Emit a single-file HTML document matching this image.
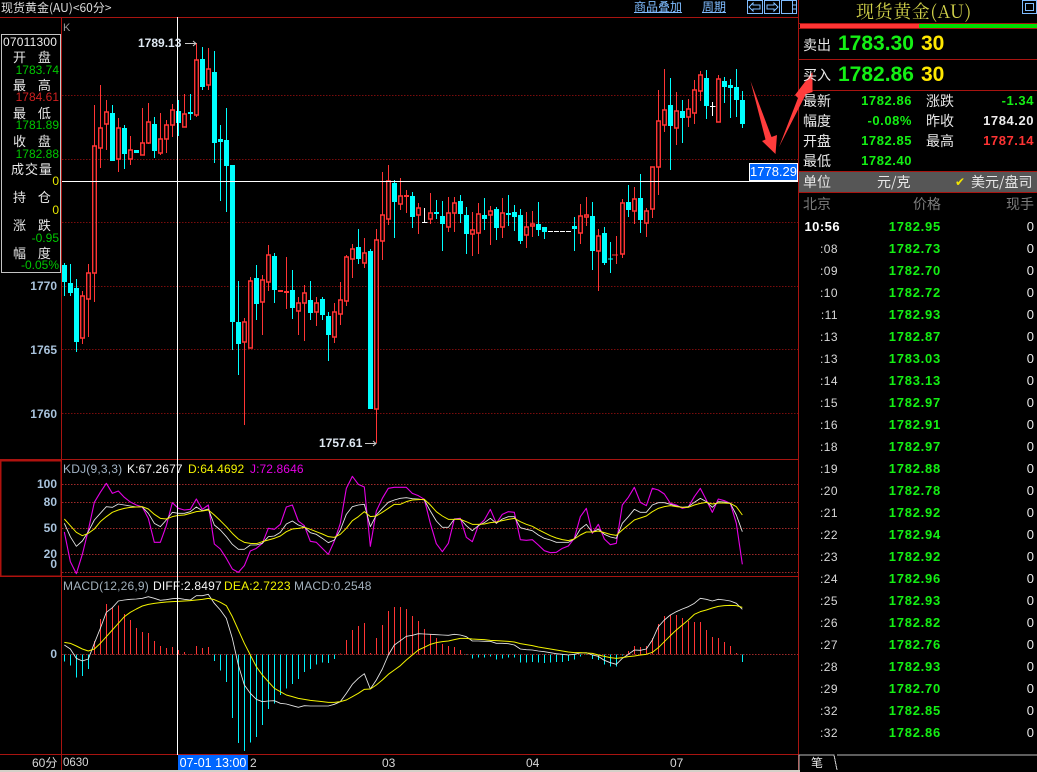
<!DOCTYPE html>
<html lang="zh"><head><meta charset="utf-8"><title>现货黄金</title>
<style>
html,body{margin:0;padding:0;background:#000;width:1037px;height:772px;overflow:hidden}
body{position:relative;font-family:"Liberation Sans","WenQuanYi Zen Hei","Noto Sans CJK SC",sans-serif;color:#ddd}
.a{position:absolute;white-space:pre;line-height:14px;font-size:12px}
.c{font-family:"WenQuanYi Zen Hei","Noto Sans CJK SC",sans-serif;font-size:13px;color:#e6e6e6}
.w{word-spacing:3px}
.r{text-align:right}
.ax{font-weight:bold;color:#a9c3dc;font-size:12px;width:50px;left:7px;text-align:right}
.g{color:#00c800}.lg{color:#14f014}
svg{position:absolute;left:0;top:0}
.lb{font-family:"WenQuanYi Zen Hei","Noto Sans CJK SC",sans-serif;font-size:14px;color:#e8e8e8;line-height:16px}
.v{font-weight:bold;font-size:13px;letter-spacing:.55px;line-height:16px;color:#14f014;text-align:right}
.big{font-weight:bold;font-size:21px;line-height:24px;color:#14f014}
.yl{font-weight:bold;font-size:21px;line-height:24px;color:#ffe800}
#t{position:absolute;left:800px;top:216px;width:237px}
#t div{display:grid;grid-template-columns:38px 103px 93px;height:22px;line-height:22px;font-size:13px;font-weight:bold;text-align:right;letter-spacing:.75px}
#t b:nth-child(1){font-weight:normal;color:#d8d8d8;font-size:12px;letter-spacing:.45px}
#t b:nth-child(2){color:#14f014}
#t b:nth-child(3){color:#e8e8e8;font-weight:normal;letter-spacing:0}
</style></head><body>
<svg width="1037" height="772" viewBox="0 0 1037 772" shape-rendering="crispEdges">
<g stroke="#7a0c0c" stroke-dasharray="1.5 1.5" stroke-width="1" fill="none"><path d="M62 95.5H798M62 159.5H798M62 222.5H798M62 286.5H798M62 349.5H798M62 413.5H798"/></g>
<g stroke="#a02a2a" stroke-dasharray="1.5 1.5" stroke-width="1" fill="none"><path d="M62 484.5H798M62 502.5H798M62 528.5H798M62 554.5H798M62 572.5H798M62 654.5H798"/></g>
<g fill="none" stroke="#a81410" stroke-width="1"><path d="M0 17.5H798M798.5 0V770M61.5 17V770M0 459.5H798M0 576.5H798M0 754.5H798"/></g>
<rect x="0.75" y="460.75" width="60.5" height="115.5" fill="none" stroke="#b0120e" stroke-width="1.5"/>
<rect x="0" y="770" width="800" height="2" fill="#d4d0c8"/>
</svg>

<svg width="1037" height="772" viewBox="0 0 1037 772">
<g id="cy" fill="#00ffff" stroke="none">
<path d="M62 265h5v17h-5zM68 283h5v10h-5zM74 288h5v54h-5zM110 113h5v48h-5zM122 128h5v26h-5zM134 150h5v3h-5zM152 124h5v27h-5zM176 111h5v12h-5zM188 112h5v2h-5zM200 59h5v28h-5zM212 72h5v71h-5zM218 139h5v3h-5zM224 140h5v26h-5zM230 165h5v157h-5zM236 322h5v22h-5zM254 278h5v26h-5zM272 256h5v34h-5zM290 290h5v18h-5zM308 300h5v13h-5zM320 299h5v16h-5zM326 316h5v19h-5zM356 247h5v12h-5zM368 251h5v158h-5zM392 183h5v19h-5zM410 196h5v21h-5zM434 212h5v2h-5zM440 216h5v8h-5zM458 201h5v13h-5zM464 215h5v19h-5zM482 215h5v4h-5zM494 209h5v19h-5zM506 213h5v2h-5zM512 212h5v5h-5zM518 215h5v26h-5zM536 224h5v6h-5zM542 227h5v5h-5zM572 226h5v3h-5zM590 216h5v35h-5zM602 233h5v30h-5zM608 258.500h5v1h-5zM626 202h5v8h-5zM638 198h5v22h-5zM668 105h5v21h-5zM680 111h5v7h-5zM704 78h5v28h-5zM722 81h5v6h-5zM728 85h5v3h-5zM734 87h5v13h-5zM740 100h5v24h-5z"/>
</g>
<path fill="none" stroke="#00ffff" stroke-width="1.1" shape-rendering="crispEdges" d="M64.500 263V296M70.500 264V296M76.500 279V352M112.500 105V161M124.500 125V169M154.500 117V158M178.500 100V136M190.500 94V120M202.500 47V90M214.500 51V163M220.500 125V201M226.500 108V212M232.500 165V350M238.500 281V375M256.500 265V320M274.500 253V303M292.500 270V319M310.500 281V320M322.500 297V320M328.500 312V361M358.500 229V264M370.500 249V409M394.500 180V238M412.500 192V228M436.500 200V219M442.500 201V251M460.500 195V223M466.500 207V254M484.500 198V230M496.500 207V240M508.500 195V226M514.500 205V231M520.500 209V244M538.500 202V236M544.500 227V239M574.500 217V251M592.500 202V270M604.500 227V265M610.500 242V273M628.500 185V217M640.500 174V233M670.500 78V170M682.500 100V143M706.500 70V119M724.500 77V103M730.500 79V118M736.500 69V117M742.500 91V128"/>
<path fill="none" stroke="#ff3434" stroke-width="1.1" shape-rendering="crispEdges" d="M82.500 291V296M82.500 338V344M88.500 264V273M88.500 299V337M94.500 105V146M94.500 273V302M100.500 85V128M100.500 148V168M106.500 100V112M106.500 124V150M118.500 118V128M118.500 159V172M130.500 136V150M130.500 159V165M142.500 108V143M148.500 103V122M148.500 143V144M160.500 113V139M160.500 153V155M166.500 120V125M166.500 139V153M172.500 104V110M172.500 125V137M184.500 94V114M196.500 43V60M196.500 115V117M208.500 48V69M208.500 85V90M244.500 318V322M244.500 342V425M250.500 277V281M262.500 275V280M262.500 302V335M268.500 245V255M268.500 282V291M286.500 257V291M286.500 293V309M298.500 297V303M298.500 311V335M304.500 285V293M304.500 303V341M316.500 297V303M316.500 312V326M334.500 303V312M334.500 337V343M340.500 282V300M340.500 314V325M346.500 255V257M346.500 301V306M352.500 244V249M352.500 259V278M364.500 238V253M364.500 263V268M376.500 229V240M376.500 409V443M382.500 172V215M382.500 241V260M388.500 165V181M388.500 219V225M400.500 178V196M400.500 204V210M406.500 190V195M406.500 197V213M418.500 203V208M418.500 215V234M430.500 193V213M430.500 219V224M448.500 197V213M448.500 227V232M454.500 197V203M454.500 213V232M472.500 212V230M472.500 234V256M478.500 203V214M478.500 233V254M490.500 206V211M490.500 215V245M502.500 198V213M502.500 227V238M526.500 212V227M526.500 235V248M532.500 211V224M532.500 226V237M580.500 204V216M580.500 233V244M586.500 197V215M586.500 217V226M598.500 229V236M598.500 251V291M616.500 236V264M622.500 199V203M622.500 254V258M634.500 187V199M634.500 211V224M646.500 208V211M646.500 223V237M652.500 209V218M658.500 90V121M658.500 167V195M664.500 69V110M664.500 125V132M676.500 92V111M676.500 128V145M688.500 99V109M688.500 117V127M694.500 80V90M694.500 113V124M700.500 71V75M700.500 91V101M718.500 75V79"/>
<path fill="none" stroke="#ff3434" stroke-width="1.4" d="M80.700 296h3.600V338h-3.600zM86.700 273h3.600V299h-3.600zM92.700 146h3.600V273h-3.600zM98.700 128h3.600V148h-3.600zM104.700 112h3.600V124h-3.600zM116.700 128h3.600V159h-3.600zM128.700 150h3.600V159h-3.600zM140.700 143h3.600V155h-3.600zM146.700 122h3.600V143h-3.600zM158.700 139h3.600V153h-3.600zM164.700 125h3.600V139h-3.600zM170.700 110h3.600V125h-3.600zM182.700 114h3.600V127h-3.600zM194.700 60h3.600V115h-3.600zM206.700 69h3.600V85h-3.600zM242.700 322h3.600V342h-3.600zM248.700 281h3.600V348h-3.600zM260.700 280h3.600V302h-3.600zM266.700 255h3.600V282h-3.600zM296.700 303h3.600V311h-3.600zM302.700 293h3.600V303h-3.600zM314.700 303h3.600V312h-3.600zM332.700 312h3.600V337h-3.600zM338.700 300h3.600V314h-3.600zM344.700 257h3.600V301h-3.600zM350.700 249h3.600V259h-3.600zM362.700 253h3.600V263h-3.600zM374.700 240h3.600V409h-3.600zM380.700 215h3.600V241h-3.600zM386.700 181h3.600V219h-3.600zM398.700 196h3.600V204h-3.600zM416.700 208h3.600V215h-3.600zM428.700 213h3.600V219h-3.600zM446.700 213h3.600V227h-3.600zM452.700 203h3.600V213h-3.600zM470.700 230h3.600V234h-3.600zM476.700 214h3.600V233h-3.600zM488.700 211h3.600V215h-3.600zM500.700 213h3.600V227h-3.600zM524.700 227h3.600V235h-3.600zM530.700 224h3.600V226h-3.600zM578.700 216h3.600V233h-3.600zM584.700 215h3.600V217h-3.600zM596.700 236h3.600V251h-3.600zM620.700 203h3.600V254h-3.600zM632.700 199h3.600V211h-3.600zM644.700 211h3.600V223h-3.600zM650.700 167h3.600V209h-3.600zM656.700 121h3.600V167h-3.600zM662.700 110h3.600V125h-3.600zM674.700 111h3.600V128h-3.600zM686.700 109h3.600V117h-3.600zM692.700 90h3.600V113h-3.600zM698.700 75h3.600V91h-3.600zM716.700 79h3.600V122h-3.600z"/>
<path fill="#ff3434" d="M278 290h5v2h-5zM284 291h5v2h-5zM404 195h5v2h-5zM612 254.500h6v1h-6z"/>
<path fill="none" stroke="#ffffff" stroke-width="1.1" shape-rendering="crispEdges" d="M424.500 208V222M422 222.500h5.500M712.500 102V116M710 106.500h5.500M548 231.500h5M554 231.500h5M560 231.500h5M566 231.500h5"/>
<path fill="#ff3c3c" d="M750.500 81L765.500 139.500L762 141L775.500 154L777 135L771.500 137Z"/>
<path fill="none" stroke="#fff" stroke-width="1.2" shape-rendering="crispEdges" d="M62 181.500H798M177.500 17V755"/>
<path fill="none" stroke="#c9c9c9" stroke-width="1" d="M185 43.500H196M193 41L196 43.500L193 46M365 443.500H376M373 441L376 443.500L373 446"/>
</svg>

<svg width="800" height="125" viewBox="0 0 2400 375" style="left:0;top:455px">
<polyline fill="none" stroke="#e400e4" stroke-width="3.300" stroke-linejoin="round" points="193,231 211,320 229,356 247,298 265,225 283,142 301,112 319,85 337,115 355,108 373,127 391,141 409,150 427,156 445,190 463,262 481,262 499,212 517,143 535,160 553,165 571,163 589,132 607,163 625,150 643,267 661,282 679,310 697,342 715,352 733,332 751,288 769,280 787,265 805,220 823,223 841,208 859,156 877,150 895,198 913,212 931,259 949,262 967,280 985,298 1003,258 1021,205 1039,100 1057,64 1075,88 1093,96 1111,274 1129,168 1147,130 1165,100 1183,97 1201,97 1219,97 1237,115 1255,122 1273,133 1291,205 1309,266 1327,290 1345,265 1363,192 1381,190 1399,247 1417,260 1435,212 1453,195 1471,163 1489,205 1507,178 1525,170 1543,172 1561,254 1579,256 1597,254 1615,270 1633,287 1651,293 1669,292 1687,280 1705,273 1723,250 1741,185 1759,160 1777,235 1795,208 1813,252 1831,269 1849,265 1867,150 1885,127 1903,97 1921,142 1939,152 1957,100 1975,105 1993,117 2011,145 2029,150 2047,160 2065,156 2083,125 2101,100 2119,135 2137,172 2155,132 2173,137 2191,145 2209,205 2227,328"/>
<polyline fill="none" stroke="#e8e8e8" stroke-width="2.600" stroke-linejoin="round" points="193,205 211,245 229,274 247,258 265,230 283,195 301,175 319,155 337,157 355,147 373,150 391,153 409,156 427,156 445,175 463,205 481,215 499,195 517,172 535,175 553,175 571,170 589,156 607,167 625,162 643,210 661,225 679,245 697,268 715,283 733,283 751,270 769,270 787,265 805,245 823,243 841,232 859,207 877,198 895,210 913,216 931,233 949,238 967,250 985,263 1003,255 1021,225 1039,178 1057,155 1075,150 1093,148 1111,215 1129,180 1147,160 1165,142 1183,135 1201,130 1219,128 1237,131 1255,132 1273,135 1291,168 1309,198 1327,217 1345,217 1363,192 1381,192 1399,212 1417,227 1435,212 1453,203 1471,190 1489,205 1507,192 1525,185 1543,185 1561,218 1579,223 1597,227 1615,240 1633,250 1651,255 1669,262 1687,262 1705,262 1723,252 1741,222 1759,208 1777,232 1795,222 1813,238 1831,246 1849,250 1867,205 1885,185 1903,163 1921,172 1939,172 1957,150 1975,143 1993,143 2011,148 2029,153 2047,157 2065,155 2083,142 2101,130 2119,140 2137,157 2155,140 2173,141 2191,145 2209,180 2227,230"/>
<polyline fill="none" stroke="#f2f200" stroke-width="3" stroke-linejoin="round" points="193,192 211,212 229,232 247,242 265,235 283,222 301,200 319,185 337,172 355,165 373,160 391,157 409,156 427,155 445,162 463,178 481,190 499,192 517,185 535,181 553,180 571,175 589,170 607,168 625,165 643,180 661,197 679,215 697,235 715,252 733,262 751,265 769,266 787,260 805,255 823,250 841,243 859,230 877,222 895,220 913,217 931,223 949,230 967,237 985,245 1003,247 1021,238 1039,220 1057,197 1075,185 1093,170 1111,185 1129,183 1147,172 1165,160 1183,148 1201,148 1219,140 1237,135 1255,134 1273,133 1291,150 1309,170 1327,183 1345,193 1363,193 1381,193 1399,200 1417,208 1435,208 1453,207 1471,203 1489,201 1507,197 1525,193 1543,190 1561,200 1579,208 1597,214 1615,224 1633,233 1651,242 1669,249 1687,254 1705,257 1723,252 1741,240 1759,231 1777,231 1795,228 1813,233 1831,238 1849,241 1867,225 1885,210 1903,195 1921,189 1939,183 1957,170 1975,160 1993,155 2011,152 2029,155 2047,157 2065,157 2083,150 2101,145 2119,142 2137,147 2155,144 2173,144 2191,145 2209,155 2227,180"/>
<path fill="none" stroke="#fff" stroke-width="3" shape-rendering="crispEdges" d="M533 0V375"/>
</svg>

<svg width="800" height="197" viewBox="0 0 2400 591" style="left:0;top:575px">
<path fill="none" stroke="#ff3434" stroke-width="3.300" shape-rendering="crispEdges" d="M283 238V198M301 238V132M319 238V87M337 238V98M355 238V92M373 238V117M391 238V135M409 238V159M427 238V171M445 238V174M463 238V198M481 238V213M499 238V219M517 238V216M535 238V225M553 238V231M571 238V237M589 238V213M607 238V219M625 238V216M1021 238V235M1039 238V195M1057 238V165M1075 238V153M1093 238V144M1111 238V234M1129 238V189M1147 238V150M1165 238V108M1183 238V96M1201 238V96M1219 238V102M1237 238V123M1255 238V138M1273 238V162M1291 238V177M1309 238V189M1327 238V207M1345 238V213M1363 238V216M1381 238V225M1885 238V228M1903 238V213M1921 238V216M1939 238V213M1957 238V189M1975 238V147M1993 238V123M2011 238V120M2029 238V120M2047 238V129M2065 238V138M2083 238V141M2101 238V141M2119 238V165M2137 238V186M2155 238V189M2173 238V201M2191 238V213M2209 238V234"/>
<path fill="none" stroke="#00f0f8" stroke-width="3.300" shape-rendering="crispEdges" d="M193 238V260M211 238V272M229 238V308M247 238V303M265 238V282M643 238V258M661 238V287M679 238V321M697 238V429M715 238V504M733 238V528M751 238V503M769 238V486M787 238V450M805 238V402M823 238V385M841 238V360M859 238V340M877 238V327M895 238V312M913 238V291M931 238V282M949 238V268M967 238V262M985 238V264M1003 238V252M1399 238V240M1417 238V251M1435 238V248M1453 238V248M1471 238V245M1489 238V254M1507 238V251M1525 238V248M1543 238V248M1561 238V263M1579 238V263M1597 238V261M1615 238V263M1633 238V264M1651 238V263M1669 238V261M1687 238V261M1705 238V258M1723 238V254M1741 238V245M1759 238V240M1777 238V252M1795 238V255M1813 238V269M1831 238V275M1849 238V275M1867 238V242M2227 238V261"/>
<polyline fill="none" stroke="#e8e8e8" stroke-width="2.600" stroke-linejoin="round" points="193,210 211,222 229,250 247,258 265,252 283,205 301,160 319,112 337,98 355,78 373,75 391,73 409,72 427,70 445,65 463,70 481,76 499,74 517,71 535,70 553,73 571,75 589,62 607,62 625,58 643,85 661,105 679,130 697,190 715,270 733,330 751,355 769,373 787,380 805,378 823,377 841,385 859,387 877,392 895,397 913,392 931,393 949,393 967,393 985,393 1003,388 1021,380 1039,355 1057,328 1075,310 1093,296 1111,342 1129,315 1147,282 1165,240 1183,210 1201,197 1219,184 1237,181 1255,176 1273,177 1291,178 1309,179 1327,180 1345,181 1363,178 1381,180 1399,185 1417,198 1435,198 1453,199 1471,199 1489,205 1507,205 1525,206 1543,210 1561,222 1579,224 1597,225 1615,228 1633,230 1651,233 1669,236 1687,238 1705,240 1723,238 1741,234 1759,233 1777,240 1795,244 1813,256 1831,263 1849,268 1867,250 1885,238 1903,225 1921,226 1939,222 1957,195 1975,155 1993,135 2011,120 2029,110 2047,102 2065,95 2083,85 2101,70 2119,73 2137,78 2155,73 2173,75 2191,78 2209,85 2227,103"/>
<polyline fill="none" stroke="#f2f200" stroke-width="3" stroke-linejoin="round" points="193,202 211,205 229,213 247,222 265,228 283,222 301,205 319,185 337,165 355,145 373,125 391,112 409,102 427,93 445,88 463,85 481,83 499,81 517,80 535,79 553,78 571,77 589,75 607,73 625,70 643,74 661,82 679,92 697,125 715,165 733,205 751,240 769,275 787,300 805,320 823,340 841,350 859,360 877,365 895,370 913,373 931,376 949,378 967,380 985,382 1003,382 1021,380 1039,375 1057,365 1075,355 1093,343 1111,342 1129,330 1147,315 1165,298 1183,285 1201,272 1219,255 1237,240 1255,225 1273,217 1291,208 1309,203 1327,200 1345,198 1363,194 1381,190 1399,190 1417,192 1435,193 1453,194 1471,196 1489,197 1507,198 1525,199 1543,201 1561,206 1579,209 1597,212 1615,216 1633,219 1651,222 1669,225 1687,228 1705,231 1723,233 1741,233 1759,234 1777,235 1795,240 1813,244 1831,248 1849,250 1867,248 1885,245 1903,243 1921,240 1939,238 1957,232 1975,218 1993,200 2011,182 2029,165 2047,150 2065,135 2083,118 2101,110 2119,105 2137,99 2155,94 2173,92 2191,91 2209,92 2227,97"/>
<path fill="none" stroke="#fff" stroke-width="3" shape-rendering="crispEdges" d="M533 0V537"/>
</svg>

<!-- top bar -->
<div class="a c" style="left:1px;top:1px;font-size:12px;color:#dcdcdc">现货黄金(AU)&lt;60分&gt;</div>
<div class="a c" style="left:634px;top:0;font-size:12px;color:#7fbcff;text-decoration:underline">商品叠加</div>
<div class="a c" style="left:702px;top:0;font-size:12px;color:#7fbcff;text-decoration:underline">周期</div>
<svg width="1037" height="20" viewBox="0 0 1037 20" shape-rendering="crispEdges">
<g fill="none" stroke="#7fbcff" stroke-width="1">
<rect x="747.500" y="0.500" width="15" height="13"/><rect x="764.500" y="0.500" width="15" height="13"/><rect x="781.500" y="0.500" width="15" height="13"/>
<path d="M749 7L753 3V5H760V9H753V11Z"/><path d="M778 7L774 3V5H767V9H774V11Z"/><path d="M792.500 1V13M792.500 5H796M792.500 9H796"/>
<rect x="1022.500" y="0.500" width="14" height="13"/><rect x="1025.500" y="3.500" width="8" height="7"/>
</g></svg>
<div class="a" style="left:63px;top:21px;font-size:11px;color:#9a9a9a">K</div>

<!-- info box -->
<div style="position:absolute;left:1px;top:34px;width:58px;height:237px;border:1px solid #c4c4c4;background:#000"></div>
<div class="a" style="left:3px;top:35px;color:#eee;letter-spacing:.2px">07011300</div>
<div class="a c w" style="left:13px;top:50px">开  盘</div><div class="a r g" style="right:978px;top:63px">1783.74</div>
<div class="a c w" style="left:13px;top:78px">最  高</div><div class="a r" style="right:978px;top:90px;color:#d02020">1784.61</div>
<div class="a c w" style="left:13px;top:106px">最  低</div><div class="a r g" style="right:978px;top:118px">1781.89</div>
<div class="a c w" style="left:13px;top:134px">收  盘</div><div class="a r g" style="right:978px;top:147px">1782.88</div>
<div class="a c" style="left:11px;top:162px;letter-spacing:1px">成交量</div><div class="a r" style="right:978px;top:174px;color:#e8e800">0</div>
<div class="a c w" style="left:13px;top:190px">持  仓</div><div class="a r" style="right:978px;top:203px;color:#e8e800">0</div>
<div class="a c w" style="left:13px;top:218px">涨  跌</div><div class="a r g" style="right:978px;top:231px">-0.95</div>
<div class="a c w" style="left:13px;top:246px">幅  度</div><div class="a r g" style="right:978px;top:258px">-0.05%</div>

<!-- axis labels -->
<div class="a ax" style="top:279px">1770</div>
<div class="a ax" style="top:343px">1765</div>
<div class="a ax" style="top:407px">1760</div>
<div class="a ax" style="top:477px">100</div>
<div class="a ax" style="top:495px">80</div>
<div class="a ax" style="top:521px">50</div>
<div class="a ax" style="top:547px">20</div>
<div class="a ax" style="top:557px">0</div>
<div class="a ax" style="top:647px">0</div>
<div class="a" style="left:138px;top:36px;font-weight:bold;color:#dfe8f2;font-size:12px">1789.13</div>
<div class="a" style="left:319px;top:436px;font-weight:bold;color:#dfe8f2;font-size:12px">1757.61</div>
<div class="a" style="left:749px;top:163px;width:47px;height:16px;line-height:16px;background:#0066ff;border:1px solid #fff;color:#fff;font-size:13px;text-align:center">1778.29</div>

<!-- indicator legends -->
<div class="a" style="left:63px;top:462px;color:#a2b4c6;letter-spacing:.2px">KDJ(9,3,3)</div>
<div class="a" style="left:127px;top:462px;color:#f4f4f4;letter-spacing:.1px">K:67.2677</div>
<div class="a" style="left:188px;top:462px;color:#f2f200;letter-spacing:.1px">D:64.4692</div>
<div class="a" style="left:250px;top:462px;color:#e400e4;letter-spacing:.1px">J:72.8646</div>
<div class="a" style="left:63px;top:579px;color:#a2b0bc;letter-spacing:.2px">MACD(12,26,9)</div>
<div class="a" style="left:153px;top:579px;color:#f4f4f4;letter-spacing:.2px">DIFF:2.8497</div>
<div class="a" style="left:224px;top:579px;color:#f2f200;letter-spacing:.2px">DEA:2.7223</div>
<div class="a" style="left:294px;top:579px;color:#a2b0bc;letter-spacing:.2px">MACD:0.2548</div>

<!-- time axis -->
<div class="a" style="left:32px;top:756px;color:#d8d8d8;font-family:'Liberation Sans','WenQuanYi Zen Hei',sans-serif">60分</div>
<div class="a" style="left:63px;top:756px;color:#d8d8d8;font-size:11.500px">0630</div>
<div class="a" style="left:178px;top:755px;width:70px;height:15px;background:#0066ff;color:#fff;text-align:center;line-height:16px;font-size:12.500px">07-01 13:00</div>
<div class="a" style="left:250px;top:756px;color:#d8d8d8">2</div>
<div class="a" style="left:382px;top:756px;color:#d8d8d8">03</div>
<div class="a" style="left:526px;top:756px;color:#d8d8d8">04</div>
<div class="a" style="left:670px;top:756px;color:#d8d8d8">07</div>

<!-- right panel -->
<div class="a" style="left:856px;top:0;font-family:'Noto Serif CJK SC',serif;font-size:18px;line-height:22px;color:#d2d24a;letter-spacing:.6px">现货黄金(AU)</div>
<svg width="1037" height="200" viewBox="0 0 1037 200" shape-rendering="crispEdges">
<rect x="800" y="24" width="119" height="4" fill="#ff3434"/><rect x="919" y="24" width="118" height="4" fill="#00e000"/>
<g stroke="#a81410" fill="none"><path d="M799 23.500H1037M799 28.500H1037M799 59.500H1037M799 90.500H1037M799 171.500H1037M799 192.500H1037"/></g>
<rect x="799" y="172" width="238" height="20" fill="#565656"/>
</svg>
<svg width="1037" height="160" viewBox="0 0 1037 160"><path fill="#ff3c3c" d="M779 147L798 98L795 95L812.500 72L812.500 92L806 94Z"/></svg>
<div class="a lb" style="left:803px;top:37px">卖出</div><div class="a big" style="left:838px;top:32px">1783.30</div><div class="a yl" style="left:921px;top:32px">30</div>
<div class="a lb" style="left:803px;top:67px">买入</div><div class="a big" style="left:838px;top:63px">1782.86</div><div class="a yl" style="left:921px;top:63px">30</div>
<div class="a lb" style="left:803px;top:93px">最新</div><div class="a v" style="right:125px;top:93px">1782.86</div><div class="a lb" style="left:926px;top:93px">涨跌</div><div class="a v" style="right:3px;top:93px">-1.34</div>
<div class="a lb" style="left:803px;top:113px">幅度</div><div class="a v" style="right:125px;top:113px">-0.08%</div><div class="a lb" style="left:926px;top:113px">昨收</div><div class="a v" style="right:3px;top:113px;color:#eee">1784.20</div>
<div class="a lb" style="left:803px;top:133px">开盘</div><div class="a v" style="right:125px;top:133px">1782.85</div><div class="a lb" style="left:926px;top:133px">最高</div><div class="a v" style="right:3px;top:133px;color:#ff3434">1787.14</div>
<div class="a lb" style="left:803px;top:153px">最低</div><div class="a v" style="right:125px;top:153px">1782.40</div>
<div class="a lb" style="left:803px;top:174px">单位</div><div class="a lb" style="left:877px;top:174px">元/克</div>
<div class="a" style="left:955px;top:175px;color:#f2e600;font-size:12px;font-family:'DejaVu Sans',sans-serif">✔</div><div class="a lb" style="left:971px;top:174px">美元/盘司</div>
<div class="a lb" style="left:803px;top:196px;color:#7c7c7c">北京</div><div class="a lb" style="left:913px;top:196px;color:#7c7c7c">价格</div><div class="a lb" style="left:1006px;top:196px;color:#7c7c7c">现手</div>

<div id="t">
<div><b style="font-weight:bold;color:#fff;font-size:13px;position:relative;left:2px">10:56</b><b>1782.95</b><b>0</b></div>
<div><b>:08</b><b>1782.73</b><b>0</b></div>
<div><b>:09</b><b>1782.70</b><b>0</b></div>
<div><b>:10</b><b>1782.72</b><b>0</b></div>
<div><b>:11</b><b>1782.93</b><b>0</b></div>
<div><b>:13</b><b>1782.87</b><b>0</b></div>
<div><b>:13</b><b>1783.03</b><b>0</b></div>
<div><b>:14</b><b>1783.13</b><b>0</b></div>
<div><b>:15</b><b>1782.97</b><b>0</b></div>
<div><b>:16</b><b>1782.91</b><b>0</b></div>
<div><b>:18</b><b>1782.97</b><b>0</b></div>
<div><b>:19</b><b>1782.88</b><b>0</b></div>
<div><b>:20</b><b>1782.78</b><b>0</b></div>
<div><b>:21</b><b>1782.92</b><b>0</b></div>
<div><b>:22</b><b>1782.94</b><b>0</b></div>
<div><b>:23</b><b>1782.92</b><b>0</b></div>
<div><b>:24</b><b>1782.96</b><b>0</b></div>
<div><b>:25</b><b>1782.93</b><b>0</b></div>
<div><b>:26</b><b>1782.82</b><b>0</b></div>
<div><b>:27</b><b>1782.76</b><b>0</b></div>
<div><b>:28</b><b>1782.93</b><b>0</b></div>
<div><b>:29</b><b>1782.70</b><b>0</b></div>
<div><b>:32</b><b>1782.85</b><b>0</b></div>
<div><b>:32</b><b>1782.86</b><b>0</b></div>
</div>
<svg width="1037" height="772" viewBox="0 0 1037 772"><path fill="none" stroke="#bbb" stroke-width="1" d="M799 770V755H834L837 770M837 755H1037" shape-rendering="crispEdges"/></svg>
<div class="a c" style="left:811px;top:756px;font-size:12px">笔</div>
</body></html>
